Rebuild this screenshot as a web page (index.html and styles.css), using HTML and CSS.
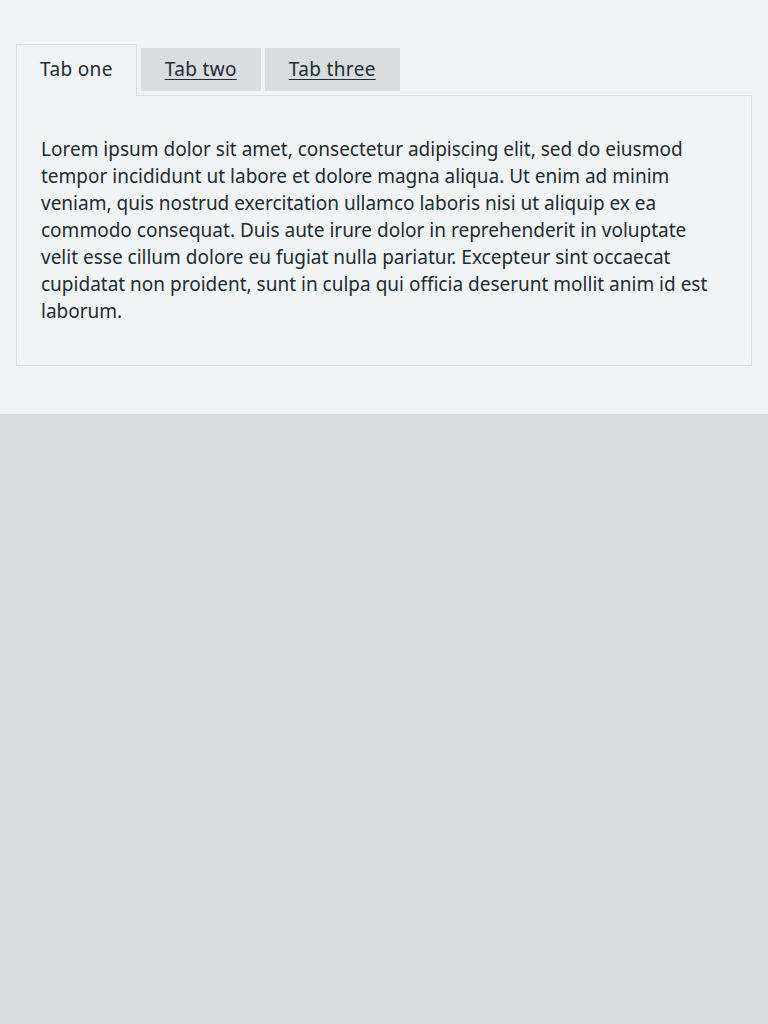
FILE: index.html
```html
<!DOCTYPE html>
<html lang="en">
<head>
<meta charset="utf-8">
<title>Tabs</title>
<link rel="stylesheet" href="styles.css">
</head>
<body>
<div class="tabs">
  <ul class="tabs-list">
    <li class="tab tab-selected"><a class="tab-link" href="#one">Tab one</a></li>
    <li class="tab"><a class="tab-link" href="#two">Tab two</a></li>
    <li class="tab"><a class="tab-link" href="#three">Tab three</a></li>
  </ul>
  <div class="tab-panel" id="one">
    <p class="panel-text">Lorem ipsum dolor sit amet, consectetur adipiscing elit, sed do eiusmod tempor incididunt ut labore et dolore magna aliqua. Ut enim ad minim veniam, quis nostrud exercitation ullamco laboris nisi ut aliquip ex ea commodo consequat. Duis aute irure dolor in reprehenderit in voluptate velit esse cillum dolore eu fugiat nulla pariatur. Excepteur sint occaecat cupidatat non proident, sunt in culpa qui officia deserunt mollit anim id est laborum.</p>
  </div>
</div>
</body>
</html>
```

FILE: styles.css
```css
html {
  background: #d8dde0;
}
body {
  margin: 0;
  padding: 44px 16px 48px;
  background: #f0f4f5;
  color: #212b32;
  font-family: "Noto Sans", "Open Sans", sans-serif;
  font-size: 19px;
}
.tabs-list {
  display: flex;
  align-items: flex-start;
  gap: 4px;
  list-style: none;
  margin: 0;
  padding: 0;
}
.tab {
  margin-top: 4px;
  padding: 10px 24px;
  line-height: 23px;
  letter-spacing: 0.35px;
  background: #d8dde0;
}
.tab-link {
  color: #212b32;
  text-decoration: underline;
  text-decoration-thickness: 1px;
  text-underline-offset: 3px;
}
.tab-selected {
  position: relative;
  z-index: 1;
  margin-top: 0;
  margin-bottom: -1px;
  padding: 13px 23px 15px;
  background: #f0f4f5;
  border: 1px solid #d8dde0;
  border-bottom: 0;
}
.tab-selected .tab-link {
  text-decoration: none;
}
.tab-panel {
  border: 1px solid #d8dde0;
  padding: 40px 24px;
}
.panel-text {
  margin: 0;
  line-height: 27px;
}
```
